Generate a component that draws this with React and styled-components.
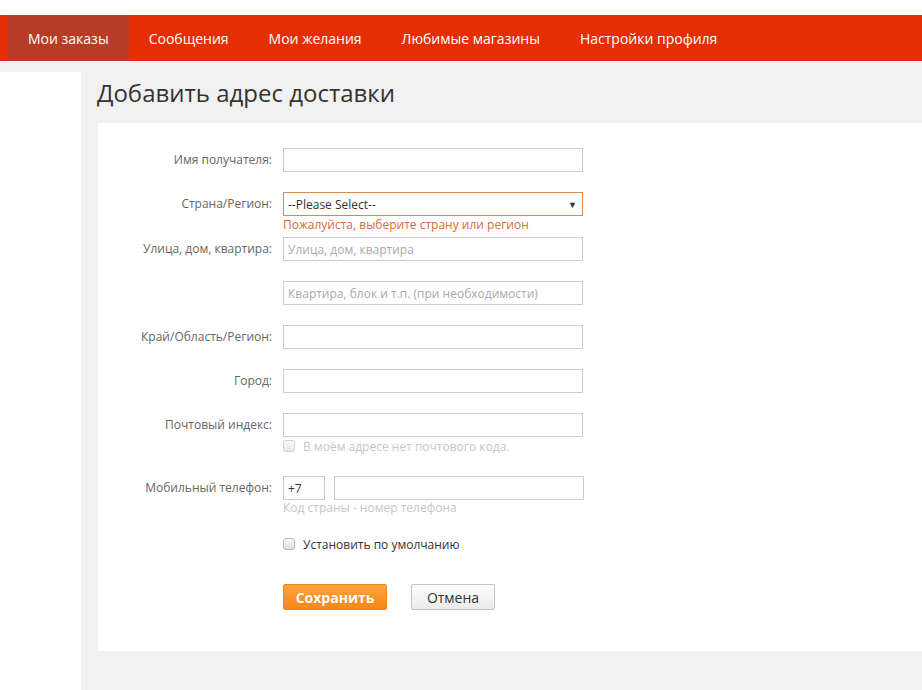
import React from "react";
import styled, { createGlobalStyle } from "styled-components";

const GlobalStyle = createGlobalStyle`
  html, body {
    margin: 0;
    padding: 0;
    background: #f1f1f1;
    font-family: "Open Sans", "Liberation Sans", sans-serif;
  }
  * { box-sizing: border-box; }
`;

const Page = styled.div`
  width: 922px;
  height: 690px;
  overflow: hidden;
  background: #f1f1f1;
  display: flex;
  flex-direction: column;
`;

const TopStrip = styled.div`
  height: 15px;
  background: #fff;
`;

const NavBar = styled.nav`
  height: 46px;
  background: #e62e04;
  display: flex;
  padding-left: 8px;
`;

const NavItem = styled.a`
  display: flex;
  align-items: center;
  padding: 0 20px;
  color: #fff;
  font-size: 14px;
  text-decoration: none;
  background: ${(p) => (p.$active ? "#b73c25" : "transparent")};
`;

const Body = styled.div`
  flex: 1;
  display: flex;
`;

const Sidebar = styled.aside`
  width: 81px;
  margin-top: 11px;
  background: #fff;
`;

const Main = styled.main`
  flex: 1;
  margin-left: 16px;
  display: flex;
  flex-direction: column;
`;

const Title = styled.h1`
  margin: 16px 0 14px;
  height: 32px;
  font-size: 24px;
  line-height: 32px;
  font-weight: 400;
  color: #333;
`;

const Panel = styled.section`
  margin-left: 1px;
  background: #fff;
  padding: 25px 0 41px 40px;
`;

const Row = styled.div`
  display: grid;
  grid-template-columns: 134px auto;
  column-gap: 11px;
  align-items: start;
  margin-bottom: ${(p) => p.$mb ?? 20}px;
`;

const Label = styled.label`
  height: 24px;
  line-height: 24px;
  text-align: right;
  font-size: 12px;
  color: #666;
  white-space: nowrap;
`;

const Field = styled.div`
  display: flex;
  flex-direction: column;
`;

const Input = styled.input`
  width: ${(p) => p.$w ?? 300}px;
  height: 24px;
  border: 1px solid #ccc;
  padding: 0 4px;
  font-family: inherit;
  font-size: 12px;
  color: #333;
  outline: none;
  &::placeholder {
    color: #aaa;
  }
`;

const SelectBox = styled.div`
  width: 300px;
  height: 24px;
  border: 1px solid #d9884f;
  display: flex;
  align-items: center;
  justify-content: space-between;
  padding: 0 5px 0 4px;
  font-size: 12px;
  color: #333;
`;

const Arrow = styled.span`
  font-size: 9px;
  color: #333;
`;

const ErrorText = styled.div`
  font-size: 12px;
  line-height: 18px;
  color: #dc6a3a;
`;

const Hint = styled.div`
  font-size: 12px;
  line-height: 16px;
  color: #c6c6c6;
`;

const PhoneGroup = styled.div`
  display: flex;
  gap: 9px;
`;

const CheckRow = styled.label`
  display: flex;
  align-items: center;
  gap: 8px;
  height: 14px;
  margin-top: ${(p) => p.$mt ?? 0}px;
  font-size: 12px;
  color: ${(p) => (p.$muted ? "#c6c6c6" : "#333")};
`;

const Box = styled.span`
  width: 12px;
  height: 12px;
  border: 1px solid #bbb;
  border-radius: 3px;
  background: linear-gradient(#f8f8f8, #dedede);
  opacity: ${(p) => (p.$muted ? 0.7 : 1)};
`;

const Actions = styled.div`
  display: flex;
  gap: 24px;
  margin-left: 145px;
  margin-top: 33px;
`;

const Button = styled.button`
  height: 26px;
  padding: 0;
  width: ${(p) => (p.$primary ? 104 : 84)}px;
  border-radius: 2px;
  font-family: inherit;
  font-size: 14px;
  font-weight: ${(p) => (p.$primary ? 700 : 400)};
  color: ${(p) => (p.$primary ? "#fff" : "#333")};
  border: 1px solid ${(p) => (p.$primary ? "#ec8320" : "#c2c2c2")};
  background: ${(p) =>
    p.$primary
      ? "linear-gradient(#ffa43a, #f7871c)"
      : "linear-gradient(#fefefe, #ebebeb)"};
  text-shadow: ${(p) => (p.$primary ? "0 0 1px rgba(180,80,0,0.4)" : "none")};
`;

const tabs = ["Мои заказы", "Сообщения", "Мои желания", "Любимые магазины", "Настройки профиля"];

export default function App() {
  return (
    <Page>
      <GlobalStyle />
      <TopStrip />
      <NavBar>
        {tabs.map((t, i) => (
          <NavItem key={t} $active={i === 0}>
            {t}
          </NavItem>
        ))}
      </NavBar>
      <Body>
        <Sidebar />
        <Main>
          <Title>Добавить адрес доставки</Title>
          <Panel>
            <Row>
              <Label>Имя получателя:</Label>
              <Input />
            </Row>
            <Row $mb={3}>
              <Label>Страна/Регион:</Label>
              <Field>
                <SelectBox>
                  <span>--Please Select--</span>
                  <Arrow>▼</Arrow>
                </SelectBox>
                <ErrorText>Пожалуйста, выберите страну или регион</ErrorText>
              </Field>
            </Row>
            <Row>
              <Label>Улица, дом, квартира:</Label>
              <Input placeholder="Улица, дом, квартира" />
            </Row>
            <Row>
              <Label />
              <Input placeholder="Квартира, блок и т.п. (при необходимости)" />
            </Row>
            <Row>
              <Label>Край/Область/Регион:</Label>
              <Input />
            </Row>
            <Row>
              <Label>Город:</Label>
              <Input />
            </Row>
            <Row $mb={23}>
              <Label>Почтовый индекс:</Label>
              <Field>
                <Input />
                <CheckRow $muted $mt={2}>
                  <Box $muted />
                  В моём адресе нет почтового кода.
                </CheckRow>
              </Field>
            </Row>
            <Row $mb={0}>
              <Label>Мобильный телефон:</Label>
              <Field>
                <PhoneGroup>
                  <Input $w={42} defaultValue="+7" />
                  <Input $w={250} />
                </PhoneGroup>
                <Hint>Код страны - номер телефона</Hint>
                <CheckRow $mt={21}>
                  <Box />
                  Установить по умолчанию
                </CheckRow>
              </Field>
            </Row>
            <Actions>
              <Button $primary>Сохранить</Button>
              <Button>Отмена</Button>
            </Actions>
          </Panel>
        </Main>
      </Body>
    </Page>
  );
}
